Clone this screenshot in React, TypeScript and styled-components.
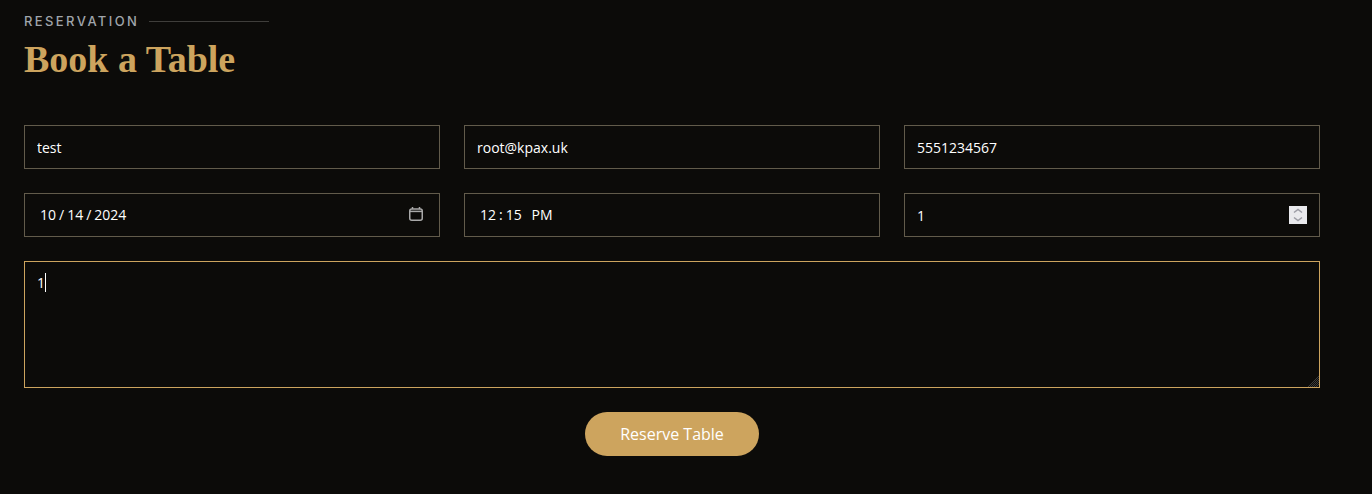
import React from 'react';
import styled, { createGlobalStyle } from 'styled-components';

const GlobalStyle = createGlobalStyle`
  html, body {
    margin: 0;
    padding: 0;
    background: #0c0b09;
    color: #ffffff;
    font-family: "Open Sans", "Liberation Sans", sans-serif;
  }
  * {
    box-sizing: border-box;
  }
`;

const Section = styled.section`
  width: 1320px;
  padding: 12px 0 38px 24px;
  background: #0c0b09;
`;

const SectionHeader = styled.header`
  margin-bottom: 39px;
`;

const Eyebrow = styled.div`
  display: flex;
  align-items: center;
  gap: 9.6px;
  height: 18px;
  font-family: "Inter", "Lato", sans-serif;
  font-size: 13px;
  font-weight: 500;
  letter-spacing: 2.4px;
  color: #a0a5ab;
  text-transform: uppercase;

  &::after {
    content: '';
    width: 120px;
    height: 1px;
    background: #3f3e3b;
  }
`;

const Title = styled.h2`
  margin: 2px 0 0;
  height: 54px;
  font-family: "Liberation Serif", "DejaVu Serif", serif;
  font-size: 38px;
  font-weight: 700;
  line-height: 54px;
  color: #cda45e;
`;

const Form = styled.form`
  width: 1296px;
`;

const FieldGrid = styled.div`
  display: grid;
  grid-template-columns: repeat(3, 416px);
  gap: 24px;
  margin-bottom: 24px;
`;

const FieldWrap = styled.div`
  position: relative;
`;

const Field = styled.input`
  display: block;
  width: 100%;
  height: 44px;
  padding: 10px 12px;
  border: 1px solid #625b4b;
  border-radius: 0;
  outline: none;
  background: #0c0b09;
  color: #ffffff;
  font-family: inherit;
  font-size: 14px;
  color-scheme: dark;

  &::-webkit-calendar-picker-indicator {
    display: none;
  }
  &::-webkit-inner-spin-button {
    -webkit-appearance: none;
    display: none;
  }
  &::-webkit-datetime-edit {
    padding: 0 0 1px 2px;
  }
  &::-webkit-datetime-edit-text {
    padding: 0 2px;
  }
  &::-webkit-datetime-edit-ampm-field {
    margin-left: 2px;
  }
`;

const CalendarIcon = styled.svg`
  position: absolute;
  top: 14px;
  left: 385px;
  width: 14px;
  height: 14px;
  color: #a9a9a9;
`;

const Stepper = styled.svg`
  position: absolute;
  top: 13px;
  right: 13px;
  width: 18px;
  height: 18px;
  background: #e9e9ed;
`;

const MessageWrap = styled.div`
  position: relative;
`;

const Message = styled.textarea`
  display: block;
  width: 100%;
  height: 127px;
  padding: 10px 12px;
  border: 1px solid #cda45e;
  border-radius: 0;
  outline: none;
  background: #0c0b09;
  color: #ffffff;
  caret-color: transparent;
  font-family: inherit;
  font-size: 14px;
  line-height: 21px;
  color-scheme: dark;

  &::-webkit-resizer {
    display: none;
  }
`;

const Caret = styled.span`
  position: absolute;
  top: 12px;
  left: 21px;
  width: 1px;
  height: 19px;
  background: #ffffff;
`;

const ResizeGrip = styled.svg`
  position: absolute;
  right: 1px;
  bottom: 1px;
  width: 12px;
  height: 12px;
`;

const Actions = styled.div`
  display: flex;
  justify-content: center;
  margin-top: 24px;
`;

const SubmitButton = styled.button`
  width: 174px;
  height: 44px;
  border: 0;
  border-radius: 50px;
  background: #cda45e;
  color: #ffffff;
  font-family: inherit;
  font-size: 16px;
`;

const App: React.FC = () => (
  <>
    <GlobalStyle />
    <Section>
      <SectionHeader>
        <Eyebrow>Reservation</Eyebrow>
        <Title>Book a Table</Title>
      </SectionHeader>
      <Form onSubmit={(e) => e.preventDefault()}>
        <FieldGrid>
          <Field type="text" defaultValue="test" />
          <Field type="email" defaultValue="root@kpax.uk" />
          <Field type="text" defaultValue="5551234567" />
          <FieldWrap>
            <Field type="date" defaultValue="2024-10-14" />
            <CalendarIcon viewBox="0 0 14 14" fill="none" stroke="currentColor" strokeWidth="1.5">
              <rect x="0.75" y="2" width="12.5" height="11.25" rx="2" />
              <path d="M1 4.4h12" />
              <path d="M3.5 0v2M10.5 0v2" />
            </CalendarIcon>
          </FieldWrap>
          <Field type="time" defaultValue="12:15" />
          <FieldWrap>
            <Field type="number" defaultValue="1" />
            <Stepper viewBox="0 0 18 18" fill="none" stroke="#9d9da6" strokeWidth="1.5">
              <path d="M5 6.5 9 3.5l4 3" />
              <path d="M5 11.5 9 14.5l4-3" />
            </Stepper>
          </FieldWrap>
        </FieldGrid>
        <MessageWrap>
          <Message defaultValue="1" />
          <Caret />
          <ResizeGrip viewBox="0 0 12 12" stroke="#3d3d3d" strokeWidth="1">
            <path d="M1 12 12 1M3 12l9-9M5 12l7-7M7 12l5-5M9 12l3-3" />
          </ResizeGrip>
        </MessageWrap>
        <Actions>
          <SubmitButton type="submit">Reserve Table</SubmitButton>
        </Actions>
      </Form>
    </Section>
  </>
);

export default App;
